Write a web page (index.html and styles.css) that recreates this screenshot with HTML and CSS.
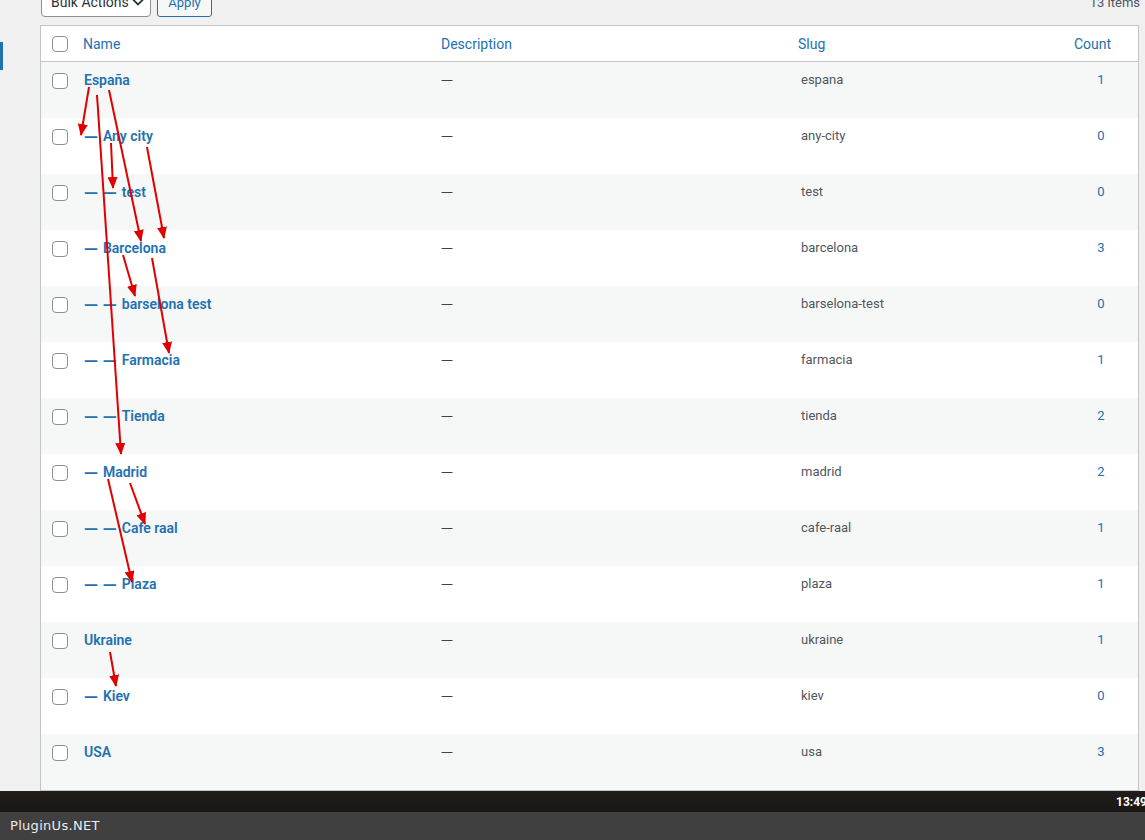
FILE: index.html
```html
<!DOCTYPE html>
<html lang="en">
<head>
    <meta charset="UTF-8">
    <meta name="viewport" content="width=device-width, initial-scale=1.0">
    <title>Locations</title>
    <link rel="stylesheet" href="styles.css">
</head>
<body>
    <div class="screen">
        <div class="admin">
            <div class="side">
                <div class="side-mark"></div>
            </div>

            <div class="main">
                <div class="tablenav">
                    <div class="bulk-select">
                        <span>Bulk Actions</span>
                        <svg width="14" height="10" viewBox="0 0 14 10"><path d="M1.5 2 L7 7.5 L12.5 2" fill="none" stroke="#2c3338" stroke-width="1.8"/></svg>
                    </div>
                    <button class="apply-btn">Apply</button>
                    <div class="items-count">13 items</div>
                </div>

                <table class="terms">
                    <colgroup>
                        <col class="col-check">
                        <col class="col-name">
                        <col class="col-desc">
                        <col class="col-slug">
                        <col class="col-count">
                    </colgroup>
                    <thead>
                        <tr>
                            <th class="check"><input type="checkbox"></th>
                            <th><a href="#">Name</a></th>
                            <th><a href="#">Description</a></th>
                            <th><a href="#">Slug</a></th>
                            <th class="count-head"><a href="#">Count</a></th>
                        </tr>
                    </thead>
                    <tbody>
                        <tr><td class="check"><input type="checkbox"></td><td><a class="row-title" href="#">España</a></td><td class="desc">—</td><td class="slug">espana</td><td class="count"><a href="#">1</a></td></tr>
                        <tr><td class="check"><input type="checkbox"></td><td><a class="row-title" href="#"><span class="lvl">— </span>Any city</a></td><td class="desc">—</td><td class="slug">any-city</td><td class="count"><a href="#">0</a></td></tr>
                        <tr><td class="check"><input type="checkbox"></td><td><a class="row-title" href="#"><span class="lvl">— — </span>test</a></td><td class="desc">—</td><td class="slug">test</td><td class="count"><a href="#">0</a></td></tr>
                        <tr><td class="check"><input type="checkbox"></td><td><a class="row-title" href="#"><span class="lvl">— </span>Barcelona</a></td><td class="desc">—</td><td class="slug">barcelona</td><td class="count"><a href="#">3</a></td></tr>
                        <tr><td class="check"><input type="checkbox"></td><td><a class="row-title" href="#"><span class="lvl">— — </span>barselona test</a></td><td class="desc">—</td><td class="slug">barselona-test</td><td class="count"><a href="#">0</a></td></tr>
                        <tr><td class="check"><input type="checkbox"></td><td><a class="row-title" href="#"><span class="lvl">— — </span>Farmacia</a></td><td class="desc">—</td><td class="slug">farmacia</td><td class="count"><a href="#">1</a></td></tr>
                        <tr><td class="check"><input type="checkbox"></td><td><a class="row-title" href="#"><span class="lvl">— — </span>Tienda</a></td><td class="desc">—</td><td class="slug">tienda</td><td class="count"><a href="#">2</a></td></tr>
                        <tr><td class="check"><input type="checkbox"></td><td><a class="row-title" href="#"><span class="lvl">— </span>Madrid</a></td><td class="desc">—</td><td class="slug">madrid</td><td class="count"><a href="#">2</a></td></tr>
                        <tr><td class="check"><input type="checkbox"></td><td><a class="row-title" href="#"><span class="lvl">— — </span>Cafe raal</a></td><td class="desc">—</td><td class="slug">cafe-raal</td><td class="count"><a href="#">1</a></td></tr>
                        <tr><td class="check"><input type="checkbox"></td><td><a class="row-title" href="#"><span class="lvl">— — </span>Plaza</a></td><td class="desc">—</td><td class="slug">plaza</td><td class="count"><a href="#">1</a></td></tr>
                        <tr><td class="check"><input type="checkbox"></td><td><a class="row-title" href="#">Ukraine</a></td><td class="desc">—</td><td class="slug">ukraine</td><td class="count"><a href="#">1</a></td></tr>
                        <tr><td class="check"><input type="checkbox"></td><td><a class="row-title" href="#"><span class="lvl">— </span>Kiev</a></td><td class="desc">—</td><td class="slug">kiev</td><td class="count"><a href="#">0</a></td></tr>
                        <tr><td class="check"><input type="checkbox"></td><td><a class="row-title" href="#">USA</a></td><td class="desc">—</td><td class="slug">usa</td><td class="count"><a href="#">3</a></td></tr>
                    </tbody>
                </table>
            </div>
        </div>

        <div class="taskbar"><span class="clock">13:49</span></div>
        <div class="watermark">PluginUs.NET</div>

        <!-- hand-drawn hierarchy arrows over the table -->
        <svg class="arrows" width="1145" height="840" viewBox="0 0 1145 840">
            <defs>
                <marker id="head" markerUnits="userSpaceOnUse" markerWidth="12" markerHeight="10" refX="11" refY="5" orient="auto">
                    <path d="M0 0 L12 5 L0 10 Z" fill="#e00000"/>
                </marker>
            </defs>
            <g stroke="#e00000" stroke-width="2" marker-end="url(#head)">
                <line x1="89" y1="87" x2="81" y2="135"/>
                <line x1="97" y1="95" x2="121" y2="454"/>
                <line x1="109" y1="90" x2="141" y2="241"/>
                <line x1="111" y1="143" x2="113" y2="188"/>
                <line x1="147" y1="147" x2="164" y2="238"/>
                <line x1="123" y1="255" x2="135" y2="296"/>
                <line x1="152" y1="258" x2="169" y2="353"/>
                <line x1="130" y1="483" x2="145" y2="524"/>
                <line x1="108" y1="479" x2="132" y2="582"/>
                <line x1="110" y1="652" x2="116" y2="686"/>
            </g>
        </svg>
    </div>
</body>
</html>
```

FILE: styles.css
```css
/* Page */
html, body {
    margin: 0;
    padding: 0;
}

body {
    background-color: #f0f0f1;
    font-family: Roboto, "Noto Sans", Arial, sans-serif;
    font-size: 13px;
    color: #3c434a;
    overflow: hidden;
}

.screen {
    position: relative;
    width: 1145px;
    height: 840px;
    overflow: hidden;
}

.admin {
    display: flex;
    height: 791px;
}

/* left admin menu edge */
.side {
    width: 40px;
    flex-shrink: 0;
}

.side-mark {
    width: 3px;
    height: 28px;
    margin-top: 42px;
    background-color: #2271b1;
}

.main {
    flex: 1;
}

/* Toolbar above the table */
.tablenav {
    display: flex;
    align-items: center;
    height: 30px;
    margin-top: -13px;
    margin-bottom: 8px;
    padding-left: 1px;
}

.bulk-select {
    display: flex;
    align-items: center;
    justify-content: space-between;
    box-sizing: border-box;
    width: 110px;
    height: 30px;
    padding: 0 5px 0 9px;
    background-color: #fff;
    border: 1px solid #8c8f94;
    border-radius: 4px;
    color: #2c3338;
    font-size: 14px;
}

.apply-btn {
    box-sizing: border-box;
    width: 55px;
    height: 30px;
    margin-left: 6px;
    background-color: #f6f7f7;
    border: 1px solid #2271b1;
    border-radius: 3px;
    color: #2271b1;
    font-family: inherit;
    font-size: 13px;
    padding: 0;
}

.items-count {
    margin-left: auto;
    padding-right: 5px;
    color: #50575e;
    font-size: 13px;
}

/* Terms table */
.terms {
    width: 1099px;
    table-layout: fixed;
    border-spacing: 0;
    background-color: #fff;
    border: 1px solid #c3c4c7;
}

.col-check { width: 32px; }
.col-name { width: 358px; }
.col-desc { width: 357px; }
.col-slug { width: 276px; }
.col-count { width: 74px; }

.terms th {
    text-align: left;
    vertical-align: top;
    font-weight: 400;
    font-size: 14px;
    line-height: 19px;
    padding: 9px 10px 7px;
    border-bottom: 1px solid #c3c4c7;
}

.terms a {
    color: #2271b1;
    text-decoration: none;
}

.terms th.count-head {
    text-align: right;
    padding-right: 27px;
}

.terms tbody tr {
    height: 56px;
}

.terms tbody tr:nth-child(odd) {
    background-color: #f6f7f7;
}

.terms td {
    vertical-align: top;
    padding: 8px 10px;
    line-height: 20px;
    color: #50575e;
}

.terms .check {
    padding: 11px 0 0 11px;
}

.terms th.check {
    padding-top: 10px;
    padding-bottom: 0;
}

.terms input[type="checkbox"] {
    appearance: none;
    display: block;
    width: 16px;
    height: 16px;
    margin: 0;
    background-color: #fff;
    border: 1px solid #8c8f94;
    border-radius: 4px;
}

.row-title {
    font-size: 14px;
    font-weight: 600;
    padding-left: 1px;
}

/* level dashes are wider in the original font */
.lvl {
    font-family: "DejaVu Sans", sans-serif;
    font-weight: 700;
    color: #2271b1;
}

.terms td.desc {
    color: #3c434a;
    font-family: "DejaVu Sans", sans-serif;
    font-size: 12px;
}

.terms td.slug {
    padding-left: 13px;
}

.terms td.count {
    text-align: center;
}

/* Screen chrome at the bottom */
.taskbar {
    display: flex;
    align-items: center;
    justify-content: flex-end;
    height: 21px;
    background: linear-gradient(#211d1b, #1a1614);
}

.clock {
    color: #fff;
    font-size: 12px;
    font-weight: 700;
    margin-right: -2px;
}

.watermark {
    height: 28px;
    line-height: 28px;
    padding-left: 10px;
    background-color: #404040;
    color: #ececec;
    font-family: "DejaVu Sans", sans-serif;
    font-size: 13px;
    letter-spacing: 0.3px;
}

.arrows {
    position: absolute;
    top: 0;
    left: 0;
    pointer-events: none;
}
```
